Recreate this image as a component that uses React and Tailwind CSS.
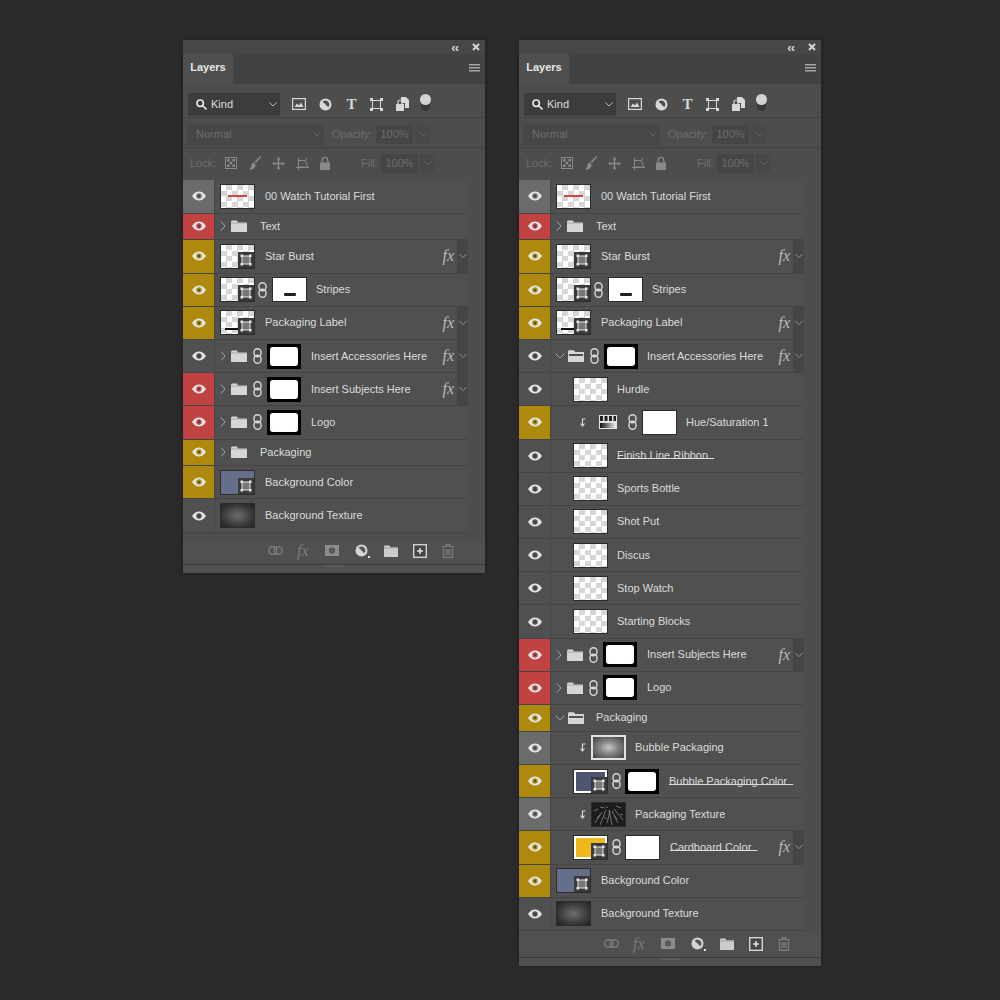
import React from "react";

const GRAY = "#505050";
const SEL = "#6b6b6b";
const RED = "#c04242";
const YEL = "#ad8a0c";

const Eye = ({ pupil }) => (
    <svg width="14" height="10" viewBox="0 0 14 10">
        <path d="M0 5C2 1.8 4.5.4 7 .4S12 1.8 14 5c-2 3.2-4.500 4.600-7 4.600S2 8.200 0 5z" fill="#e4e4e4" />
        <circle cx="7" cy="5" r="2.700" fill={pupil} />
        <circle cx="7" cy="5" r="1.100" fill="#3c3c3c" />
    </svg>
);

const Chevron = ({ className }) => (
    <svg className={className} width="6" height="10" viewBox="0 0 6 10" fill="none" stroke="#a8a8a8" strokeWidth="1">
        <path d="M1 .5 5 5 1 9.500" />
    </svg>
);

const ChevronOpen = ({ className }) => (
    <svg className={className} width="10" height="6" viewBox="0 0 10 6" fill="none" stroke="#a8a8a8" strokeWidth="1">
        <path d="M.5 .5 5 5 9.500 .5" />
    </svg>
);

const Folder = ({ className }) => (
    <svg className={className} width="16" height="12" viewBox="0 0 16 12">
        <path d="M0 1.500V12h16V2.500H7L6 .5H1z" fill="#d6d6d6" />
        <path d="M0 3h16" stroke="#8a8a8a" strokeWidth=".6" />
    </svg>
);

const FolderOpen = ({ className }) => (
    <svg className={className} width="16" height="12" viewBox="0 0 16 12">
        <path d="M0 1V12h16V2H7L6 .3H1z" fill="#d6d6d6" />
        <path d="M1 4h14v2H1z" fill="#505050" />
    </svg>
);

const Link = ({ className }) => (
    <svg className={className} width="9" height="16" viewBox="0 0 9 16" fill="none" stroke="#d8d8d8" strokeWidth="1.400">
        <rect x="1" y=".8" width="7" height="8" rx="3.500" />
        <rect x="1" y="7.200" width="7" height="8" rx="3.500" />
    </svg>
);

const ClipArrow = ({ className }) => (
    <svg className={className} width="7" height="9" viewBox="0 0 7 9" fill="none" stroke="#d8d8d8" strokeWidth="1.200">
        <path d="M6.500 1H3.500v6" />
        <path d="M1.500 5.500 3.500 8l2-2.500" />
    </svg>
);

const Badge = () => (
    <span className="absolute right-0 bottom-0 w-[16px] h-[16px] bg-[#3a3a3a] flex items-center justify-center">
        <svg width="12" height="12" viewBox="0 0 12 12">
            <rect x="2" y="2" width="8" height="8" fill="#777" stroke="#e8e8e8" strokeWidth="1" />
            <rect x=".5" y=".5" width="2.500" height="2.500" fill="#e8e8e8" />
            <rect x="9" y=".5" width="2.500" height="2.500" fill="#e8e8e8" />
            <rect x=".5" y="9" width="2.500" height="2.500" fill="#e8e8e8" />
            <rect x="9" y="9" width="2.500" height="2.500" fill="#e8e8e8" />
        </svg>
    </span>
);

const checker =
    "bg-[repeating-conic-gradient(#d6d6d6_0_25%,#ffffff_0_50%)] bg-[length:11px_11px]";

// layer thumbnail, 35x25 with a dark outline
const Thumb = ({ kind = "check", badge, className = "" }) => {
    const base = `relative shrink-0 w-[35px] h-[25px] border border-[#2c2c2c] overflow-hidden ${className}`;
    if (kind === "star")
        return (
            <span className={`${base} ${checker}`}>
                <span className="absolute left-[7px] top-[10px] w-[19px] h-[2px] bg-[#d84444]" />
            </span>
        );
    if (kind === "label")
        return (
            <span className={`${base} ${checker}`}>
                <span className="absolute left-[4px] top-[17px] w-[15px] h-[2px] bg-[#111]" />
                <Badge />
            </span>
        );
    if (kind === "blue")
        return (
            <span className={`${base} bg-[#64708a]`}>
                <Badge />
            </span>
        );
    if (kind === "bubbleColor")
        return (
            <span className={`${base} bg-white p-[2px]`}>
                <span className="block w-full h-full bg-[#4d5670]" />
                <Badge />
            </span>
        );
    if (kind === "cardboard")
        return (
            <span className={`${base} bg-white p-[2px]`}>
                <span className="block w-full h-full bg-[#efb91a]" />
                <Badge />
            </span>
        );
    if (kind === "texture")
        return (
            <span
                className={`${base} bg-[radial-gradient(ellipse_at_center,#6e6e6e_0%,#3f3f3f_55%,#202020_100%)]`}
            />
        );
    if (kind === "bubble")
        return (
            <span className={`${base} border-[#e2e2e2] border-2 bg-[radial-gradient(ellipse_at_center,#c8c8c8_0%,#808080_45%,#3f3f3f_100%)]`} />
        );
    if (kind === "grit")
        return (
            <span className={`${base} bg-[#1c1c1c]`}>
                <svg width="33" height="23" viewBox="0 0 33 23" stroke="#9a9a9a" strokeWidth=".7" fill="none">
                    <path d="M3 20 10 9M8 22l6-15M15 20l3-12M20 22 17 7M26 20 20 8M31 17 22 6M2 8l4-2M8 4l5 1M24 3l5 2M12 14l3 2M22 13l3 3M5 15l3-3M28 11l3 1M14 3l2 2" />
                </svg>
            </span>
        );
    return (
        <span className={`${base} ${checker}`}>
            {badge && <Badge />}
        </span>
    );
};

const Mask = ({ kind = "soft", className = "" }) => {
    if (kind === "soft")
        return (
            <span className={`shrink-0 w-[34px] h-[25px] bg-black p-[3px] ${className}`}>
                <span className="block w-full h-full bg-white rounded-[3px]" />
            </span>
        );
    return (
        <span className={`relative shrink-0 w-[35px] h-[25px] bg-white border border-[#2c2c2c] ${className}`}>
            {kind === "stripes" && (
                <span className="absolute left-[11px] top-[15px] w-[12px] h-[3px] bg-[#222] rounded-[1px]" />
            )}
        </span>
    );
};

const Name = ({ className = "", u, children }) => (
    <span
        className={`text-[11px] leading-none whitespace-pre text-[#dcdcdc] ${
            u ? "underline underline-offset-[-1px] decoration-[#dcdcdc] [text-decoration-skip-ink:none]" : ""
        } ${className}`}
    >
        {children}
    </span>
);

const Row = ({ color = GRAY, fx, folder, children }) => (
    <div className={`flex items-stretch border-b border-[#454545] ${folder ? "h-[26.8px]" : "h-[33.2px]"}`}>
        <div
            className="w-[32px] shrink-0 flex items-center justify-center border-r border-[#464646]"
            style={{ backgroundColor: color }}
        >
            <Eye pupil={color} />
        </div>
        <div className="flex-1 flex items-center bg-[#505050] min-w-0">{children}</div>
        {fx && (
            <div className="flex items-center">
                <span className="bg-[#505050] self-stretch flex items-center pr-[3px] font-['Liberation_Serif',serif] italic text-[16px] text-[#bcbcbc]">
                    fx
                </span>
                <span className="w-[11px] self-stretch bg-[#454545] flex items-center justify-center">
                    <ChevronOpen className="w-[8px]" />
                </span>
            </div>
        )}
    </div>
);

const groupClosed = (name, color, fx) => (
    <Row color={color} fx={fx}>
        <Chevron className="ml-[5px]" />
        <Folder className="ml-[5px]" />
        <Link className="ml-[6px]" />
        <Mask className="ml-[5px]" />
        <Name className="ml-[10px]">{name}</Name>
    </Row>
);

const head = [
    <Row key="w" color={SEL}>
        <Thumb kind="star" className="ml-[5px]" />
        <Name className="ml-[10px] pt-[1px]">00 Watch Tutorial First</Name>
    </Row>,
    <Row key="t" color={RED} folder>
        <Chevron className="ml-[5px]" />
        <Folder className="ml-[5px]" />
        <Name className="ml-[13px]">Text</Name>
    </Row>,
    <Row key="s" color={YEL} fx>
        <Thumb badge className="ml-[5px]" />
        <Name className="ml-[10px]">Star Burst</Name>
    </Row>,
    <Row key="st" color={YEL}>
        <Thumb badge className="ml-[5px]" />
        <Link className="ml-[3px]" />
        <Mask kind="stripes" className="ml-[5px]" />
        <Name className="ml-[9px]">Stripes</Name>
    </Row>,
    <Row key="p" color={YEL} fx>
        <Thumb kind="label" className="ml-[5px]" />
        <Name className="ml-[10px]">Packaging Label</Name>
    </Row>,
];

const tail = [
    <Row key="bc" color={YEL}>
        <Thumb kind="blue" className="ml-[5px]" />
        <Name className="ml-[10px]">Background Color</Name>
    </Row>,
    <Row key="bt">
        <Thumb kind="texture" className="ml-[5px]" />
        <Name className="ml-[10px]">Background Texture</Name>
    </Row>,
];

const leftRows = (
    <>
        {head}
        {groupClosed("Insert Accessories Here", GRAY, true)}
        {groupClosed("Insert Subjects Here", RED, true)}
        {groupClosed("Logo", RED)}
        <Row color={YEL} folder>
            <Chevron className="ml-[5px]" />
            <Folder className="ml-[5px]" />
            <Name className="ml-[13px]">Packaging</Name>
        </Row>
        {tail}
    </>
);

const Child = ({ name, u }) => (
    <Row>
        <Thumb className="ml-[22px]" />
        <Name u={u} className="ml-[9px]">{name}</Name>
    </Row>
);

const rightRows = (
    <>
        {head}
        <Row fx>
            <ChevronOpen className="ml-[4px]" />
            <FolderOpen className="ml-[3px]" />
            <Link className="ml-[6px]" />
            <Mask className="ml-[5px]" />
            <Name className="ml-[9px]">Insert Accessories Here</Name>
        </Row>
        <Child name="Hurdle" />
        <Row color={YEL}>
            <ClipArrow className="ml-[28px]" />
            <svg className="ml-[13px]" width="18" height="14" viewBox="0 0 18 14">
                <defs>
                    <linearGradient id="adj" x1="0" x2="1" y1="0" y2="0">
                        <stop offset="0" stopColor="#111" />
                        <stop offset="1" stopColor="#eee" />
                    </linearGradient>
                </defs>
                <rect width="18" height="14" fill="#e4e4e4" />
                <path d="M1 1h3v5H1zM5.500 1h3v5h-3zM10 1h3v5h-3zM14.500 1H17v5h-2.500z" fill="#222" />
                <rect x="1" y="8" width="16" height="5" fill="url(#adj)" />
            </svg>
            <Link className="ml-[11px]" />
            <Mask kind="plain" className="ml-[5px]" />
            <Name className="ml-[9px]">Hue/Saturation 1</Name>
        </Row>
        <Child name={"Finish Line Ribbon  "} u />
        <Child name="Sports Bottle" />
        <Child name="Shot Put" />
        <Child name="Discus" />
        <Child name="Stop Watch" />
        <Child name="Starting Blocks" />
        {groupClosed("Insert Subjects Here", RED, true)}
        {groupClosed("Logo", RED)}
        <Row color={YEL} folder>
            <ChevronOpen className="ml-[4px]" />
            <FolderOpen className="ml-[3px]" />
            <Name className="ml-[12px]">Packaging</Name>
        </Row>
        <Row color={SEL}>
            <ClipArrow className="ml-[28px]" />
            <Thumb kind="bubble" className="ml-[5px]" />
            <Name className="ml-[9px]">Bubble Packaging</Name>
        </Row>
        <Row color={YEL}>
            <Thumb kind="bubbleColor" className="ml-[22px]" />
            <Link className="ml-[4px]" />
            <Mask className="ml-[4px]" />
            <Name u className="ml-[10px]">{"Bubble Packaging Color  "}</Name>
        </Row>
        <Row color={SEL}>
            <ClipArrow className="ml-[28px]" />
            <Thumb kind="grit" className="ml-[5px]" />
            <Name className="ml-[9px]">Packaging Texture</Name>
        </Row>
        <Row color={YEL} fx>
            <Thumb kind="cardboard" className="ml-[22px]" />
            <Link className="ml-[4px]" />
            <Mask kind="plain" className="ml-[4px]" />
            <Name u className="ml-[10px]">{"Cardboard Color  "}</Name>
        </Row>
        {tail}
    </>
);

const FilterIcons = () => (
    <div className="flex items-center ml-[12px] text-[#d8d8d8]">
        <svg width="14" height="12" viewBox="0 0 14 12">
            <rect x=".6" y=".6" width="12.800" height="10.800" fill="none" stroke="#d8d8d8" strokeWidth="1.200" />
            <path d="M2.500 9 5 5.500l2 2 2-3 2.500 4.500z" fill="#d8d8d8" />
        </svg>
        <svg className="ml-[13px]" width="13" height="13" viewBox="0 0 13 13">
            <circle cx="6.500" cy="6.500" r="6" fill="#d8d8d8" />
            <path d="M6.500 2.500a4 4 0 0 1 2.800 6.800L3.700 3.700a4 4 0 0 1 2.800-1.200z" fill="#4e4e4e" />
        </svg>
        <span className="ml-[13px] w-[13px] text-center font-['Liberation_Serif',serif] font-bold text-[15px] leading-none text-[#d8d8d8]">
            T
        </span>
        <svg className="ml-[12px]" width="13" height="13" viewBox="0 0 13 13" fill="#d8d8d8">
            <path d="M2.500 2.500h8v8h-8z" fill="none" stroke="#d8d8d8" strokeWidth="1" />
            <path d="M0 0h3v3H0zM10 0h3v3h-3zM0 10h3v3H0zM10 10h3v3h-3z" />
        </svg>
        <svg className="ml-[13px]" width="13" height="14" viewBox="0 0 13 14">
            <path d="M5 0h5l3 3v8H9V6H5z" fill="#d8d8d8" />
            <path d="M0 7h8v7H0z" fill="#d8d8d8" />
            <path d="M2 7V5a2 2 0 0 1 4 0v2" fill="none" stroke="#d8d8d8" strokeWidth="1.200" />
        </svg>
        <span className="ml-[12px] -mt-[2px] relative w-[9px] h-[16px] rounded-full bg-[#3a3a3a]">
            <span className="absolute -left-[1px] -top-[1px] w-[11px] h-[11px] rounded-full bg-[#d4d4d4]" />
        </span>
    </div>
);

const Disabled = ({ value, className }) => (
    <div className={`flex items-center gap-[2px] ${className}`}>
        <span className="w-[37px] h-[19px] bg-[#454545] flex items-center justify-center text-[11px] text-[#6e6e6e]">
            {value}
        </span>
        <span className="w-[15px] h-[19px] bg-[#484848] flex items-center justify-center">
            <svg width="8" height="5" viewBox="0 0 8 5" fill="none" stroke="#646464">
                <path d="M.5 .5 4 4 7.500 .5" />
            </svg>
        </span>
    </div>
);

const LockIcons = () => (
    <div className="flex items-center ml-[10px]">
        <svg width="12" height="12" viewBox="0 0 12 12">
            <rect x=".5" y=".5" width="11" height="11" fill="none" stroke="#8a8a8a" />
            <path d="M2 2h2.600v2.600H2zM7.400 2H10v2.600H7.400zM4.700 4.700h2.600v2.600H4.700zM2 7.400h2.600V10H2zM7.400 7.400H10V10H7.400z" fill="#8a8a8a" />
        </svg>
        <svg className="ml-[12px]" width="13" height="14" viewBox="0 0 13 14">
            <path d="M12.500 .5 7 7l-1.500-1.200L11.500 0zM5 6.500c-2 .3-2.500 2-2.800 3.500C2 11.500 1.200 12.500 0 13.500c3 .5 6-.5 6.700-4.500z" fill="#8a8a8a" />
        </svg>
        <svg className="ml-[10px]" width="13" height="13" viewBox="0 0 13 13" fill="#8a8a8a">
            <path d="M6.500 0 8.500 2.500h-1.300V5.800H10.500V4.500L13 6.500l-2.500 2V7.200H7.200v3.300h1.300l-2 2.500-2-2.500h1.300V7.200H2.500v1.300L0 6.500l2.500-2v1.300h3.300V2.500H4.500z" />
        </svg>
        <svg className="ml-[11px]" width="13" height="13" viewBox="0 0 13 13" fill="none" stroke="#8a8a8a">
            <path d="M2.500 3.500h7l2 6.500h-9zM0 10.500h13M2.500 1v12M9 1 11.500 3" />
        </svg>
        <svg className="ml-[11px]" width="10" height="13" viewBox="0 0 10 13">
            <path d="M0 5.500h10V13H0z" fill="#8a8a8a" />
            <path d="M2.200 5.500V3.200a2.800 2.800 0 0 1 5.600 0v2.300" fill="none" stroke="#8a8a8a" strokeWidth="1.400" />
        </svg>
    </div>
);

const FooterIcons = () => (
    <div className="flex items-center justify-end pr-[31px] h-[27px] bg-[#505050] border-b border-[#3a3a3a]">
        <svg width="15" height="9" viewBox="0 0 15 9" fill="none" stroke="#7c7c7c" strokeWidth="1.500">
            <rect x=".8" y=".8" width="8" height="7.400" rx="3.600" />
            <rect x="6.200" y=".8" width="8" height="7.400" rx="3.600" />
        </svg>
        <span className="ml-[14px] w-[14px] font-['Liberation_Serif',serif] italic text-[16px] leading-none text-[#7c7c7c]">
            fx
        </span>
        <svg className="ml-[14px]" width="14" height="11" viewBox="0 0 14 11">
            <path fillRule="evenodd" d="M0 0h14v11H0zM7 2.500a3 3 0 1 0 0 6 3 3 0 0 0 0-6z" fill="#8c8c8c" />
            <circle cx="7" cy="5.500" r="3" fill="#5a5a5a" />
        </svg>
        <svg className="ml-[16px]" width="15" height="14" viewBox="0 0 15 14">
            <circle cx="6.500" cy="6.500" r="6" fill="#d4d4d4" />
            <path d="M6.500 2.500a4 4 0 0 1 2.800 6.800L3.700 3.700a4 4 0 0 1 2.800-1.200z" fill="#555" />
            <rect x="13" y="12" width="2" height="2" fill="#e0e0e0" />
        </svg>
        <svg className="ml-[14px]" width="14" height="12" viewBox="0 0 14 12">
            <path d="M0 1V12h14V2.200H6.500L5.500.4H1z" fill="#cccccc" />
            <path d="M0 3h14" stroke="#868686" strokeWidth=".6" />
        </svg>
        <svg className="ml-[15px]" width="14" height="14" viewBox="0 0 14 14">
            <rect x=".7" y=".7" width="12.600" height="12.600" fill="#444" stroke="#d4d4d4" strokeWidth="1.400" />
            <path d="M4 7h6M7 4v6" stroke="#e0e0e0" strokeWidth="1.600" />
        </svg>
        <svg className="ml-[15px]" width="12" height="14" viewBox="0 0 12 14" fill="none" stroke="#7c7c7c" strokeWidth="1.200">
            <path d="M0 2.500h12M4 2.500V.7h4v1.800M1.500 2.500V13.300h9V2.500M4.200 5v6M6 5v6M7.800 5v6" />
        </svg>
    </div>
);

const Panel = ({ spacer, children }) => (
    <div className="w-[302px] shrink-0 bg-[#4d4d4d] shadow-[0_0_3px_#1c1c1c] font-['Liberation_Sans',sans-serif]">
        {/* title strip */}
        <div className="h-[14px] flex items-center justify-end pr-[5px] bg-[#474747]">
            <span className="text-[13px] leading-none font-bold text-[#d6d6d6] tracking-[-1px]">‹‹</span>
            <svg className="ml-[14px]" width="8" height="8" viewBox="0 0 8 8" stroke="#d6d6d6" strokeWidth="2">
                <path d="M1 1l6 6M7 1 1 7" />
            </svg>
        </div>

        {/* tabs */}
        <div className="h-[30px] flex items-stretch bg-[#424242]">
            <div className="w-[50px] bg-[#4f4f4f] flex items-center justify-center pb-[4px] text-[11px] font-bold text-[#e8e8e8]">
                Layers
            </div>
            <div className="flex-1 flex items-center justify-end pr-[5px] pb-[2px]">
                <svg width="11" height="8" viewBox="0 0 11 8" fill="#a6a6a6">
                    <path d="M0 0h11v1.500H0zM0 3h11v1.500H0zM0 6h11v1.500H0z" />
                </svg>
            </div>
        </div>

        {/* filter */}
        <div className="h-[34px] flex items-center pl-[5px] pt-[7px] border-b border-[#424242]">
            <div className="w-[92px] h-[23px] bg-[#3c3c3c] flex items-center pl-[8px] pr-[3px]">
                <svg width="11" height="11" viewBox="0 0 11 11" fill="none" stroke="#e8e8e8" strokeWidth="1.600">
                    <circle cx="4.200" cy="4.200" r="3.200" />
                    <path d="M6.700 6.700 10.500 10.500" />
                </svg>
                <span className="ml-[4px] text-[11px] text-[#dcdcdc]">Kind</span>
                <svg className="ml-auto" width="8" height="5" viewBox="0 0 8 5" fill="none" stroke="#bdbdbd">
                    <path d="M.5 .5 4 4 7.500 .5" />
                </svg>
            </div>
            <FilterIcons />
        </div>

        {/* blend mode */}
        <div className="h-[30px] flex items-center pl-[4px] pt-[4px] border-b border-[#424242]">
            <div className="w-[137px] h-[22px] bg-[#474747] flex items-center pl-[9px] pr-[3px] text-[11px] text-[#6e6e6e]">
                Normal
                <svg className="ml-auto" width="8" height="5" viewBox="0 0 8 5" fill="none" stroke="#646464">
                    <path d="M.5 .5 4 4 7.500 .5" />
                </svg>
            </div>
            <span className="ml-[8px] w-[44px] text-[11px] text-[#6e6e6e]">Opacity:</span>
            <Disabled value="100%" />
        </div>

        {/* lock */}
        <div className="h-[30px] flex items-center pl-[7px]">
            <span className="w-[25px] text-[11px] text-[#6e6e6e]">Lock:</span>
            <LockIcons />
            <span className="ml-[31px] w-[20px] text-[11px] text-[#6e6e6e]">Fill:</span>
            <Disabled value="100%" />
        </div>

        {/* layers */}
        <div className="pt-[2.400px] pr-[17px]">{children}</div>
        {spacer}

        <FooterIcons />
        <div className="h-[8px] bg-[#505050] flex justify-center">
            <span className="w-[20px] h-[2px] bg-[#5c5c5c]" />
        </div>
    </div>
);

export default function App() {
    return (
        <div className="w-[1000px] h-[1000px] bg-[#2a2a2a] flex items-start gap-[34px] pt-[40px] pl-[183px]">
            <Panel spacer={<div className="h-[5px]" />}>{leftRows}</Panel>
            <Panel>{rightRows}</Panel>
        </div>
    );
}
